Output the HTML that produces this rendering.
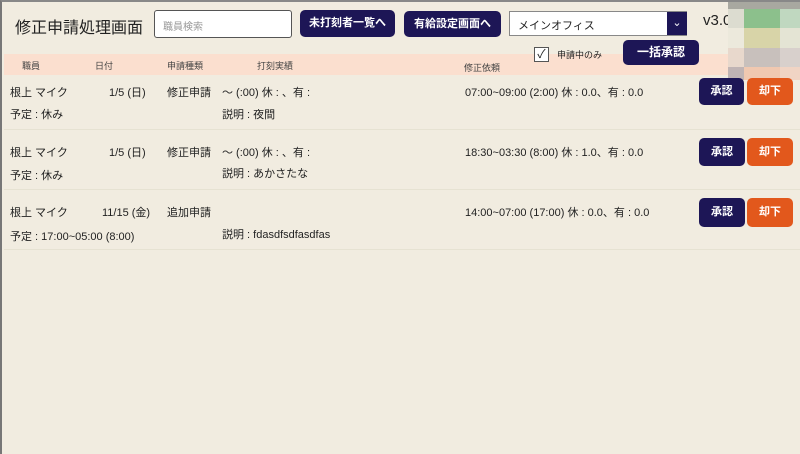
<!DOCTYPE html>
<html><head><meta charset="utf-8"><style>
*{margin:0;padding:0;box-sizing:border-box}
body{width:800px;height:454px;background:#f1ece0;font-family:"Liberation Sans","Noto Sans CJK JP",sans-serif;color:#222;position:relative;overflow:hidden;border-left:2px solid #777;border-top:2px solid #888}
.a{position:absolute;white-space:nowrap}
.btn{position:absolute;background:#1d1656;color:#fff;border-radius:5px;font-size:11px;font-weight:bold;text-align:center}
.or{background:#e2581c}
.s{font-size:11px}
.h{font-size:9px;color:#444}
.line{position:absolute;left:2px;width:796px;height:1px;background:#e6e2d2}
.m{position:absolute}
</style></head><body>
<div class="a" style="left:13px;top:12px;font-size:16px;color:#222">修正申請処理画面</div>
<div class="a" style="left:152px;top:8px;width:138px;height:28px;background:#fff;border:1px solid #555;border-radius:3px;font-size:10px;color:#999;padding:7px 8px">職員検索</div>
<div class="btn" style="left:298px;top:8px;width:95px;height:27px;line-height:27px">未打刻者一覧へ</div>
<div class="btn" style="left:402px;top:9px;width:97px;height:26px;line-height:26px">有給設定画面へ</div>
<div class="a" style="left:507px;top:9px;width:178px;height:25px;background:#fff;border:1px solid #888;font-size:11px;padding:5px 8px">メインオフィス</div>
<div class="a" style="left:665px;top:10px;width:20px;height:23px;background:#1d1656;color:#fff;font-size:11px;text-align:center;line-height:23px">&#8964;</div>
<div class="a" style="left:701px;top:10px;font-size:15px;color:#222">v3.0</div>
<div class="a" style="left:2px;top:52px;width:796px;height:21px;background:#fbdfcf"></div>
<div class="a h" style="left:20px;top:57px">職員</div>
<div class="a h" style="left:93px;top:57px">日付</div>
<div class="a h" style="left:165px;top:57px">申請種類</div>
<div class="a h" style="left:255px;top:57px">打刻実績</div>
<div class="a h" style="left:462px;top:59px">修正依頼</div>
<div class="a" style="left:532px;top:45px;width:15px;height:15px;background:#fff;border:1px solid #555;font-size:12px;line-height:13px;text-align:center">✓</div>
<div class="a h" style="left:555px;top:46px;color:#222">申請中のみ</div>
<div class="btn" style="left:621px;top:38px;width:76px;height:25px;line-height:25px;font-size:12px">一括承認</div>
<!-- mosaic -->
<div class="m" style="left:726px;top:0;width:74px;height:7px;background:#a8a8a0"></div>
<div class="m" style="left:726px;top:7px;width:16px;height:19px;background:#dcdcd0"></div>
<div class="m" style="left:742px;top:7px;width:36px;height:19px;background:#8cc08c"></div>
<div class="m" style="left:778px;top:7px;width:22px;height:19px;background:#c0d8c0"></div>
<div class="m" style="left:726px;top:26px;width:16px;height:20px;background:#ece9dc"></div>
<div class="m" style="left:742px;top:26px;width:36px;height:20px;background:#d8d4a8"></div>
<div class="m" style="left:778px;top:26px;width:22px;height:20px;background:#e4e4d4"></div>
<div class="m" style="left:726px;top:46px;width:16px;height:19px;background:#e8d8cc"></div>
<div class="m" style="left:742px;top:46px;width:36px;height:19px;background:#c8c0bc"></div>
<div class="m" style="left:778px;top:46px;width:22px;height:19px;background:#d8d0cc"></div>
<div class="m" style="left:726px;top:65px;width:16px;height:13px;background:#c0b4b4"></div>
<div class="m" style="left:742px;top:65px;width:36px;height:13px;background:#f0c8b0"></div>
<div class="m" style="left:778px;top:65px;width:22px;height:13px;background:#f0d4c4"></div>
<!-- row1 -->
<div class="a s" style="left:8px;top:82px">根上 マイク</div>
<div class="a s" style="left:107px;top:82px">1/5 (日)</div>
<div class="a s" style="left:165px;top:82px">修正申請</div>
<div class="a s" style="left:220px;top:82px">～ (:00) 休 : 、有 :</div>
<div class="a s" style="left:8px;top:104px">予定 : 休み</div>
<div class="a s" style="left:220px;top:104px">説明 : 夜間</div>
<div class="a s" style="left:463px;top:82px">07:00~09:00 (2:00) 休 : 0.0、有 : 0.0</div>
<div class="btn" style="left:697px;top:76px;width:45px;height:27px;line-height:27px">承認</div>
<div class="btn or" style="left:745px;top:76px;width:46px;height:27px;line-height:27px">却下</div>
<div class="line" style="top:127px"></div>
<!-- row2 -->
<div class="a s" style="left:8px;top:142px">根上 マイク</div>
<div class="a s" style="left:107px;top:142px">1/5 (日)</div>
<div class="a s" style="left:165px;top:142px">修正申請</div>
<div class="a s" style="left:220px;top:142px">～ (:00) 休 : 、有 :</div>
<div class="a s" style="left:8px;top:165px">予定 : 休み</div>
<div class="a s" style="left:220px;top:163px">説明 : あかさたな</div>
<div class="a s" style="left:463px;top:142px">18:30~03:30 (8:00) 休 : 1.0、有 : 0.0</div>
<div class="btn" style="left:697px;top:136px;width:46px;height:28px;line-height:28px">承認</div>
<div class="btn or" style="left:745px;top:136px;width:46px;height:28px;line-height:28px">却下</div>
<div class="line" style="top:187px"></div>
<!-- row3 -->
<div class="a s" style="left:8px;top:202px">根上 マイク</div>
<div class="a s" style="left:100px;top:202px">11/15 (金)</div>
<div class="a s" style="left:165px;top:202px">追加申請</div>
<div class="a s" style="left:8px;top:226px">予定 : 17:00~05:00 (8:00)</div>
<div class="a s" style="left:220px;top:224px">説明 : fdasdfsdfasdfas</div>
<div class="a s" style="left:463px;top:202px">14:00~07:00 (17:00) 休 : 0.0、有 : 0.0</div>
<div class="btn" style="left:697px;top:196px;width:46px;height:29px;line-height:29px">承認</div>
<div class="btn or" style="left:745px;top:196px;width:46px;height:29px;line-height:29px">却下</div>
<div class="line" style="top:247px"></div>
</body></html>
